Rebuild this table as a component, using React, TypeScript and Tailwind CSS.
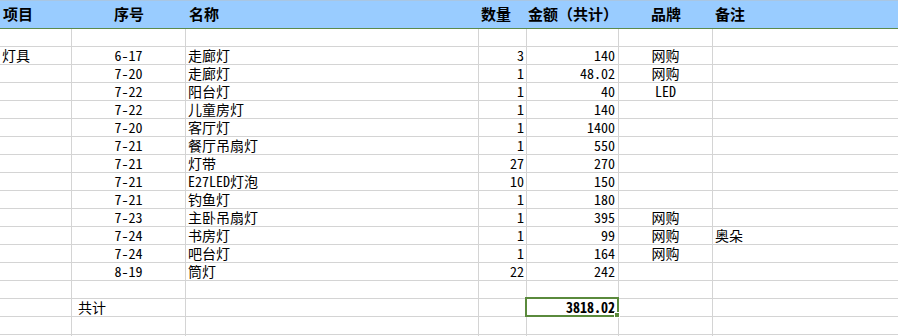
import React from 'react';

type Row = {
  a?: string;
  no?: string;
  name?: string;
  qty?: string;
  amount?: string;
  brand?: string;
  note?: string;
};

const rows: Row[] = [
  {},
  { a: '灯具', no: '6-17', name: '走廊灯', qty: '3', amount: '140', brand: '网购' },
  { no: '7-20', name: '走廊灯', qty: '1', amount: '48.02', brand: '网购' },
  { no: '7-22', name: '阳台灯', qty: '1', amount: '40', brand: 'LED' },
  { no: '7-22', name: '儿童房灯', qty: '1', amount: '140' },
  { no: '7-20', name: '客厅灯', qty: '1', amount: '1400' },
  { no: '7-21', name: '餐厅吊扇灯', qty: '1', amount: '550' },
  { no: '7-21', name: '灯带', qty: '27', amount: '270' },
  { no: '7-21', name: 'E27LED灯泡', qty: '10', amount: '150' },
  { no: '7-21', name: '钓鱼灯', qty: '1', amount: '180' },
  { no: '7-23', name: '主卧吊扇灯', qty: '1', amount: '395', brand: '网购' },
  { no: '7-24', name: '书房灯', qty: '1', amount: '99', brand: '网购', note: '奥朵' },
  { no: '7-24', name: '吧台灯', qty: '1', amount: '164', brand: '网购' },
  { no: '8-19', name: '筒灯', qty: '22', amount: '242' },
  {},
];

const grid = 'grid grid-cols-[72px_114px_293px_48px_92px_94px_1fr]';
const cell = 'h-[17px] border-r border-[#d4d4d4] whitespace-nowrap overflow-visible leading-[17px]';
const font = {
  fontFamily: '"Noto Sans Mono CJK SC", "Liberation Mono", "Noto Sans CJK SC", monospace',
};

const EmptyRow: React.FC<{ last?: boolean }> = ({ last }) => (
  <div className={last ? grid : `${grid} border-b border-[#d4d4d4]`}>
    <div className={cell}></div>
    <div className={cell}></div>
    <div className={cell}></div>
    <div className={cell}></div>
    <div className={cell}></div>
    <div className={cell}></div>
    <div className={`${cell} border-r-0`}></div>
  </div>
);

const App: React.FC = () => {
  return (
    <div className="w-[898px] h-[336px] overflow-hidden bg-white text-black text-[14px]" style={font}>
      {/* header band */}
      <div
        className={`${grid} h-[29px] bg-[#99ccff] border-t border-[#a9c6e2] border-b border-b-[#5b8a4c] font-bold text-[15px] items-center`}
        style={{ fontFamily: '"Noto Sans CJK SC", sans-serif' }}
      >
        <div className="pl-[3px]">项目</div>
        <div className="text-center">序号</div>
        <div className="pl-[3px]">名称</div>
        <div className="pl-[2px]">数量</div>
        <div className="pl-[1px] whitespace-nowrap">金额（共计）</div>
        <div className="text-center">品牌</div>
        <div className="pl-[2px]">备注</div>
      </div>

      {rows.map((r, i) => (
        <div key={i} className={`${grid} border-b border-[#d4d4d4]`}>
          <div className={`${cell} pl-[2px]`}>{r.a}</div>
          <div className={`${cell} text-center`}>{r.no}</div>
          <div className={`${cell} pl-[2px]`}>{r.name}</div>
          <div className={`${cell} text-right pr-[2px]`}>{r.qty}</div>
          <div className={`${cell} text-right pr-[3px]`}>{r.amount}</div>
          <div className={`${cell} text-center`}>{r.brand}</div>
          <div className={`${cell} border-r-0 pl-[2px]`}>{r.note}</div>
        </div>
      ))}

      {/* total row */}
      <div className={`${grid} border-b border-[#d4d4d4]`}>
        <div className={cell}></div>
        <div className={`${cell} pl-[6px]`}>共计</div>
        <div className={cell}></div>
        <div className={cell}></div>
        <div className={`${cell} relative text-right pr-[3px] font-bold`}>
          3818.02
          <div className="absolute left-[-2px] top-[-2px] right-[-1px] bottom-[-1px] border-2 border-[#5a8a3c]"></div>
          <div className="absolute right-[-2px] bottom-[-2px] w-[6px] h-[6px] bg-[#5a8a3c] border border-white"></div>
        </div>
        <div className={cell}></div>
        <div className={`${cell} border-r-0`}></div>
      </div>

      <EmptyRow />
      <EmptyRow last />
    </div>
  );
};

export default App;
